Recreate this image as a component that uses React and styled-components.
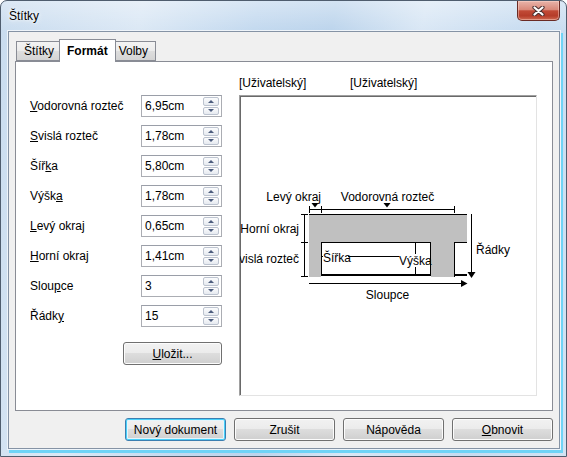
import React from 'react'
import styled, { createGlobalStyle } from 'styled-components'

const GlobalStyle = createGlobalStyle`
html, body {
  margin:0;
  padding:0;
}
body {
  width:567px;
  height:457px;
  overflow:hidden;
  background:#fff;
  font-family:"Liberation Sans", Arial, sans-serif;
  font-size:12px;
  color:#000;
}
* { box-sizing:border-box; }
`

const rows = [
    { pre: '', key: 'V', post: 'odorovná rozteč', value: '6,95cm' },
    { pre: '', key: 'S', post: 'vislá rozteč', value: '1,78cm' },
    { pre: 'Šíř', key: 'k', post: 'a', value: '5,80cm' },
    { pre: 'Výšk', key: 'a', post: '', value: '1,78cm' },
    { pre: '', key: 'L', post: 'evý okraj', value: '0,65cm' },
    { pre: '', key: 'H', post: 'orní okraj', value: '1,41cm' },
    { pre: 'Slou', key: 'p', post: 'ce', value: '3' },
    { pre: 'Řádk', key: 'y', post: '', value: '15' },
]

const App = () => {
    return (
        <>
            <GlobalStyle />
            <Window>
                <TitleBar>
                    <Title>Štítky</Title>
                    <CloseButton>
                        <svg width="13" height="10" viewBox="0 0 13 10">
                            <path d="M2.5 1.5 L10.5 8.5 M10.5 1.5 L2.5 8.5" stroke="#4a3030" strokeWidth="4.2" strokeLinecap="round" />
                            <path d="M2.5 1.5 L10.5 8.5 M10.5 1.5 L2.5 8.5" stroke="#fff" strokeWidth="2.2" strokeLinecap="round" />
                        </svg>
                    </CloseButton>
                </TitleBar>
                <Client>
                    <TabStrip>
                        <Tab>Štítky</Tab>
                        <Tab $active>Formát</Tab>
                        <Tab>Volby</Tab>
                    </TabStrip>
                    <Panel>
                        <FormColumn>
                            {rows.map(r => (
                                <FormRow key={r.value + r.post + r.pre}>
                                    <Label>{r.pre}<U>{r.key}</U>{r.post}</Label>
                                    <Field>
                                        <Value>{r.value}</Value>
                                        <Spinner>
                                            <SpinHalf><Arrow $up /></SpinHalf>
                                            <SpinHalf><Arrow /></SpinHalf>
                                        </Spinner>
                                    </Field>
                                </FormRow>
                            ))}
                            <SaveButton><U>U</U>ložit...</SaveButton>
                        </FormColumn>
                        <PreviewColumn>
                            <Captions>
                                <span>[Uživatelský]</span>
                                <span>[Uživatelský]</span>
                            </Captions>
                            <Preview>
                                <Diagram viewBox="240 96 296 299" width="296" height="299">
                                    <path d="M309 214 H467 V242 H454 V277 H431 V242 H321 V277 H309 Z" fill="#c0c0c0" />
                                    <g stroke="#000" strokeWidth="1" fill="none" shapeRendering="crispEdges">
                                        {/* top edge of labels */}
                                        <line x1="309" y1="214.5" x2="467" y2="214.5" />
                                        {/* first label */}
                                        <line x1="321.5" y1="242" x2="321.5" y2="276" />
                                        <line x1="321" y1="242.5" x2="431" y2="242.5" />
                                        <line x1="430.5" y1="242" x2="430.5" y2="276" />
                                        <line x1="321" y1="256.5" x2="415" y2="256.5" />
                                        <line x1="415.5" y1="242" x2="415.5" y2="276" />
                                        {/* second label */}
                                        <line x1="454.5" y1="242" x2="454.5" y2="277" />
                                        <line x1="454" y1="242.5" x2="467" y2="242.5" />
                                        {/* horizontal dimensions */}
                                        <line x1="309" y1="209.5" x2="455" y2="209.5" />
                                        <line x1="309.5" y1="206" x2="309.5" y2="213" />
                                        <line x1="321.5" y1="206" x2="321.5" y2="213" />
                                        <line x1="454.5" y1="206" x2="454.5" y2="213" />
                                        {/* vertical dimensions */}
                                        <line x1="304.5" y1="214" x2="304.5" y2="277" />
                                        <line x1="301" y1="214.5" x2="308" y2="214.5" />
                                        <line x1="301" y1="242.5" x2="308" y2="242.5" />
                                        <line x1="301" y1="276.5" x2="308" y2="276.5" />
                                        {/* rows arrow */}
                                        <line x1="471.5" y1="214" x2="471.5" y2="273" />
                                        {/* columns arrow */}
                                        <line x1="309" y1="283.5" x2="462" y2="283.5" />
                                    </g>
                                    <rect x="321" y="274" width="110" height="2" fill="#000" />
                                    <rect x="454" y="274" width="13" height="2" fill="#000" />
                                    <polygon points="311.5,203 318.5,203 315,207.5" fill="#000" />
                                    <polygon points="383.5,203 390.5,203 387,207.5" fill="#000" />
                                    <polygon points="467.5,272 475.5,272 471.5,278" fill="#000" />
                                    <polygon points="461,280 461,287 467.5,283.5" fill="#000" />
                                    <rect x="323" y="250" width="25" height="13" fill="#fff" />
                                    <rect x="399" y="254" width="30" height="13" fill="#fff" />
                                    <text x="321" y="201" textAnchor="end">Levý okraj</text>
                                    <text x="387.5" y="201" textAnchor="middle">Vodorovná rozteč</text>
                                    <text x="299" y="233" textAnchor="end">Horní okraj</text>
                                    <text x="299" y="263" textAnchor="end">Svislá rozteč</text>
                                    <text x="323" y="262">Šířka</text>
                                    <text x="399" y="265">Výška</text>
                                    <text x="476" y="254">Řádky</text>
                                    <text x="387.5" y="299" textAnchor="middle">Sloupce</text>
                                </Diagram>
                            </Preview>
                        </PreviewColumn>
                    </Panel>
                    <Footer>
                        <Button $default>Nový dokument</Button>
                        <Button>Zrušit</Button>
                        <Button>Nápověda</Button>
                        <Button><U>O</U>bnovit</Button>
                    </Footer>
                </Client>
            </Window>
        </>
    )
}

export default App

const Window = styled.div`
width:567px;
height:457px;
display:flex;
flex-direction:column;
border:1px solid #4f5d6e;
border-radius:7px 7px 0 0;
background:
  linear-gradient(to bottom, rgba(255,255,255,0.35), rgba(255,255,255,0) 30px),
  linear-gradient(100deg, #c9dcef 0%, #dbe8f5 22%, #c3d9ef 40%, #bcd4ec 52%, #d9e7f5 66%, #c6dbf0 84%, #d3e3f3 100%);
overflow:hidden;
`

const TitleBar = styled.div`
height:30px;
flex:none;
display:flex;
justify-content:space-between;
align-items:flex-start;
padding-left:8px;
`

const Title = styled.div`
margin-top:8px;
line-height:15px;
font-size:12px;
color:#000;
text-shadow:0 0 6px #fff, 0 0 3px #fff;
`

const CloseButton = styled.div`
width:43px;
height:20px;
margin-right:6px;
border:1px solid #6a2b25;
border-top:none;
border-radius:0 0 5px 5px;
background:linear-gradient(to bottom, #e8b4aa 0%, #d9897a 45%, #c14a36 52%, #b53c29 78%, #cf6a52 100%);
box-shadow:inset 0 0 0 1px rgba(255,220,210,0.45);
display:flex;
align-items:center;
justify-content:center;
`

const Client = styled.div`
flex:1;
margin:0 6px 7px 7px;
border:1px solid #8593a5;
background:#f0f0f0;
display:flex;
flex-direction:column;
padding:7px 6px 7px 6px;
box-shadow:0 0 0 1px #eef4fa, 2px 3px 0 1px #6fd3f6;
`

const TabStrip = styled.div`
height:22px;
flex:none;
display:flex;
align-items:flex-end;
padding-left:1px;
`

const Tab = styled.div`
position:relative;
z-index:${p => p.$active ? 2 : 1};
height:${p => p.$active ? '23px' : '20px'};
margin:${p => p.$active ? '0 -2px -1px -2px' : '0'};
padding:0 7px;
display:flex;
align-items:center;
border:1px solid #898c95;
border-bottom:${p => p.$active ? 'none' : '1px solid #898c95'};
background:${p => p.$active ? '#fff' : 'linear-gradient(to bottom, #f3f3f3 0%, #ebebeb 50%, #dedede 50%, #d4d4d4 100%)'};
font-weight:${p => p.$active ? 'bold' : 'normal'};
& + & { margin-left:${p => p.$active ? '-3px' : '-1px'}; }
`

const Panel = styled.div`
height:350px;
flex:none;
background:#fff;
border:1px solid #898c95;
display:flex;
gap:17px;
padding:14px 14px 0 14px;
`

const FormColumn = styled.div`
width:192px;
display:flex;
flex-direction:column;
gap:8px;
padding-top:19px;
`

const FormRow = styled.div`
height:22px;
display:flex;
align-items:center;
`

const Label = styled.div`
width:111px;
white-space:nowrap;
`

const U = styled.span`
text-decoration:underline;
`

const Field = styled.div`
width:81px;
height:22px;
border:1px solid #abadb3;
border-top-color:#9a9ea8;
background:#fff;
display:flex;
align-items:center;
justify-content:space-between;
padding:0 2px 0 3px;
`

const Value = styled.span`
line-height:15px;
`

const Spinner = styled.div`
width:16px;
height:18px;
display:flex;
flex-direction:column;
gap:1px;
`

const SpinHalf = styled.div`
flex:1;
border:1px solid #bcc3cf;
border-radius:2px;
background:linear-gradient(to bottom, #fbfcfd, #e6eaf0);
display:flex;
align-items:center;
justify-content:center;
`

const Arrow = styled.div`
width:0;
height:0;
border-left:3px solid transparent;
border-right:3px solid transparent;
${p => p.$up ? 'border-bottom:3px solid #4c5d7e;' : 'border-top:3px solid #4c5d7e;'}
`

const SaveButton = styled.div`
align-self:flex-end;
margin-top:7px;
width:99px;
height:23px;
border:1px solid #707070;
border-radius:3px;
background:linear-gradient(to bottom, #f2f2f2 0%, #ebebeb 50%, #dddddd 50%, #cfcfcf 100%);
box-shadow:inset 0 0 0 1px #fcfcfc;
display:flex;
align-items:center;
justify-content:center;
`

const PreviewColumn = styled.div`
width:298px;
display:flex;
flex-direction:column;
`

const Captions = styled.div`
display:grid;
grid-template-columns:111px auto;
height:15px;
line-height:15px;
margin-bottom:4px;
`

const Preview = styled.div`
width:298px;
height:301px;
border:1px solid;
border-color:#a0a0a0 #e3e3e3 #e3e3e3 #a0a0a0;
box-shadow:inset 1px 1px 0 #696969;
background:#fff;
overflow:hidden;
`

const Diagram = styled.svg`
display:block;
font-family:"Liberation Sans", Arial, sans-serif;
font-size:12px;
fill:#000;
`

const Footer = styled.div`
margin-top:7px;
height:23px;
flex:none;
display:flex;
justify-content:flex-end;
gap:8px;
`

const Button = styled.div`
width:101px;
height:23px;
border:1px solid ${p => p.$default ? '#3c7fb1' : '#707070'};
border-radius:3px;
background:linear-gradient(to bottom, #f2f2f2 0%, #ebebeb 50%, #dddddd 50%, #cfcfcf 100%);
box-shadow:${p => p.$default ? 'inset 0 0 0 1px #48d0fa, inset 0 0 0 2px #e4f5fc' : 'inset 0 0 0 1px #fcfcfc'};
display:flex;
align-items:center;
justify-content:center;
`
